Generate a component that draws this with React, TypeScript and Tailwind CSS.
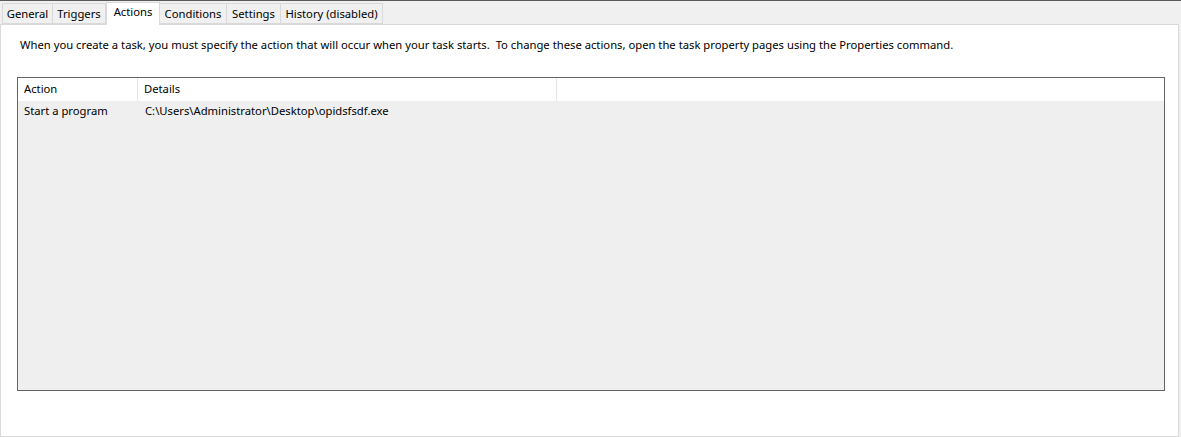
const tabs = ["General", "Triggers", "Actions", "Conditions", "Settings", "History (disabled)"];
const tabWidths = ["w-[51px]", "w-[54px]", "w-[54px]", "w-[68px]", "w-[55px]", "w-[103px]"];

export default function App() {
  return (
    <div
      className="w-[1181px] h-[437px] bg-[#f0f0f0] border-t border-[#5a5a5a] flex flex-col text-[11.25px] text-black overflow-hidden"
      style={{ fontFamily: '"Segoe UI", "Noto Sans", "Open Sans", sans-serif' }}
    >
      {/* tab strip */}
      <div className="flex items-end h-[23px] pl-[2px] relative z-10">
        {tabs.map((t, i) =>
          t === "Actions" ? (
            <div
              key={t}
              className={`${tabWidths[i]} h-[23px] -mb-px bg-white border border-b-0 border-[#d9d9d9] flex items-start justify-center pt-[1px]`}
            >
              {t}
            </div>
          ) : (
            <div
              key={t}
              className={`${tabWidths[i]} h-[21px] bg-[#f0f0f0] border border-[#d9d9d9] -ml-px first:ml-0 flex items-center justify-center pt-[1px]`}
            >
              {t}
            </div>
          )
        )}
      </div>

      {/* panel */}
      <div className="w-[1179px] flex-1 bg-white border border-[#d9d9d9] flex flex-col">
        <p className="pl-[19px] pt-[12px] leading-[16px]">
          When you create a task, you must specify the action that will occur when your task starts.&nbsp; To change these
          actions, open the task property pages using the Properties command.
        </p>

        <div className="mt-[24px] ml-[16px] w-[1148px] h-[314px] border border-[#646464] bg-[#efefef] flex flex-col">
          <div className="flex h-[23px] bg-white">
            <div className="w-[120px] border-r border-[#e5e5e5] pl-[6px] flex items-center">Action</div>
            <div className="w-[419px] border-r border-[#e5e5e5] pl-[6px] flex items-center">Details</div>
            <div className="flex-1" />
          </div>
          <div className="flex h-[21px] items-center">
            <div className="w-[120px] pl-[6px]">Start a program</div>
            <div className="pl-[7px]">C:\Users\Administrator\Desktop\opidsfsdf.exe</div>
          </div>
        </div>
      </div>
    </div>
  );
}
